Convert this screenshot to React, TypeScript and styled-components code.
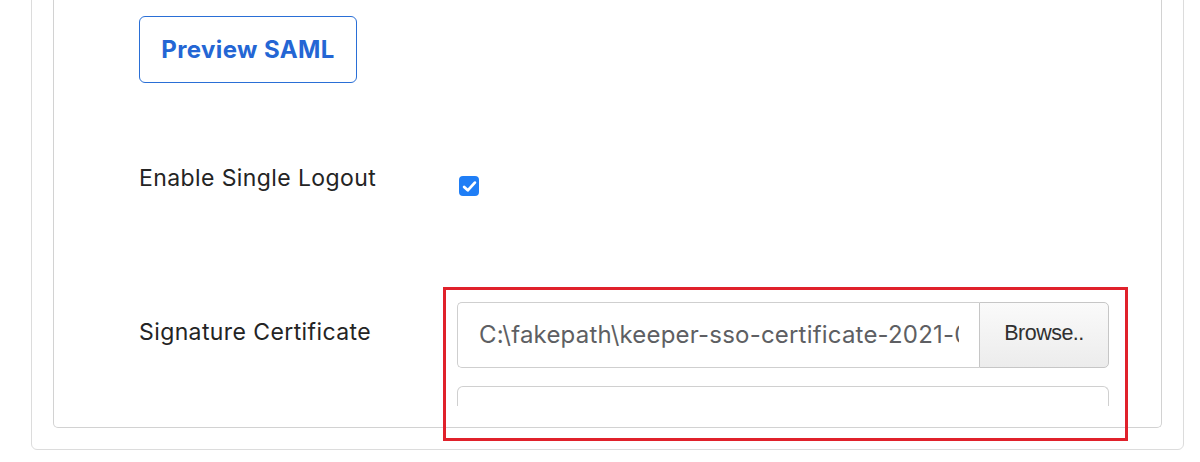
import React from "react";
import styled, { createGlobalStyle } from "styled-components";

const GlobalStyle = createGlobalStyle`
  html, body {
    margin: 0;
    padding: 0;
    background: #ffffff;
  }
  body {
    font-family: Inter, "Open Sans", sans-serif;
    color: #222;
    overflow: hidden;
  }
`;

const Page = styled.div`
  width: 1200px;
  height: 462px;
  overflow: hidden;
`;

const OuterCard = styled.div`
  margin: -12px 0 0 31px;
  width: 1153px;
  height: 462px;
  box-sizing: border-box;
  border: 1px solid #dcdcdc;
  border-radius: 6px;
  padding: 0 21px 0 21px;
`;

const InnerCard = styled.div`
  position: relative;
  height: 439px;
  box-sizing: border-box;
  border: 1px solid #d2d2d2;
  border-top: none;
  border-radius: 0 0 5px 5px;
  padding: 27px 0 0 85px;
`;

const PreviewButton = styled.button`
  display: block;
  width: 218px;
  height: 67px;
  box-sizing: border-box;
  border: 1.5px solid #2a6fd6;
  border-radius: 6px;
  background: #fff;
  color: #2466d4;
  font-family: Inter, "Open Sans", sans-serif;
  font-weight: 700;
  font-size: 24px;
  letter-spacing: 0.4px;
  padding: 0;
  cursor: pointer;
`;

const FieldRow = styled.div<{ $top: number }>`
  display: grid;
  grid-template-columns: 318px 652px;
  align-items: start;
  margin-top: ${(p) => p.$top}px;
`;

const Label = styled.div<{ $pad: number }>`
  padding-top: ${(p) => p.$pad}px;
  font-size: 23px;
  line-height: 26px;
  color: #242424;
  letter-spacing: 0.4px;
  white-space: nowrap;
`;

const CheckBox = styled.span`
  display: inline-flex;
  align-items: center;
  justify-content: center;
  margin: 15px 0 0 2px;
  width: 20px;
  height: 20px;
  border-radius: 4px;
  background: #1f7ef6;
`;

const Controls = styled.div`
  position: relative;
  height: 104px;
`;

const FileGroup = styled.div`
  display: flex;
  height: 66px;
`;

const FileName = styled.div`
  flex: 1;
  box-sizing: border-box;
  border: 1px solid #cfcfcf;
  border-right: none;
  border-radius: 5px 0 0 5px;
  padding: 0 20px 0 21px;
  display: flex;
  align-items: center;
  overflow: hidden;
  white-space: nowrap;
  font-size: 24px;
  color: #5e5f63;
  letter-spacing: 0.2px;
`;

const NameClip = styled.span`
  display: block;
  overflow: hidden;
  width: 480px;
`;

const BrowseButton = styled.button`
  width: 130px;
  box-sizing: border-box;
  border: 1px solid #c6c6c6;
  border-radius: 0 5px 5px 0;
  background: linear-gradient(#fafafa, #ececec);
  font-family: "Liberation Sans", Arial, sans-serif;
  font-size: 21.5px;
  color: #303030;
  letter-spacing: -0.5px;
  padding: 0 0 2px 0;
  cursor: pointer;
`;

const SecondInput = styled.div`
  margin-top: 18px;
  height: 20px;
  box-sizing: border-box;
  border: 1px solid #d0d0d0;
  border-bottom: none;
  border-radius: 6px 6px 0 0;
`;

const Highlight = styled.div`
  position: absolute;
  left: -14px;
  top: -15px;
  width: 685px;
  height: 154px;
  box-sizing: border-box;
  border: 3px solid #e0212b;
  pointer-events: none;
`;

const Check = () => (
  <svg width="15" height="13" viewBox="0 0 14 12">
    <path
      d="M2 6.4 L5.4 9.6 L12 2.4"
      fill="none"
      stroke="#fff"
      strokeWidth="2.6"
      strokeLinecap="round"
      strokeLinejoin="round"
    />
  </svg>
);

export default function App() {
  return (
    <Page>
      <GlobalStyle />
      <OuterCard>
        <InnerCard>
          <PreviewButton>Preview SAML</PreviewButton>

          <FieldRow $top={78}>
            <Label $pad={4}>Enable Single Logout</Label>
            <div>
              <CheckBox>
                <Check />
              </CheckBox>
            </div>
          </FieldRow>

          <FieldRow $top={105}>
            <Label $pad={17}>Signature Certificate</Label>
            <Controls>
              <FileGroup>
                <FileName>
                  <NameClip>C:\fakepath\keeper-sso-certificate-2021-0</NameClip>
                </FileName>
                <BrowseButton>Browse..</BrowseButton>
              </FileGroup>
              <SecondInput />
              <Highlight />
            </Controls>
          </FieldRow>
        </InnerCard>
      </OuterCard>
    </Page>
  );
}
